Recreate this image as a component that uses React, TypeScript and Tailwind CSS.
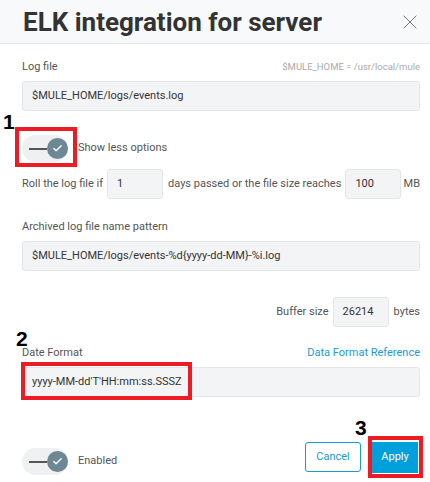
import { X, Check } from 'lucide-react'

const font = { fontFamily: '"Segoe UI", Roboto, "Liberation Sans", sans-serif' }

const Toggle = () => (
  <div className="relative w-[46px] h-[27px] rounded-full bg-[#eef0f2] shrink-0">
    <div className="absolute left-[7px] top-[13px] w-[18px] h-[1.5px] bg-[#555]" />
    <div className="absolute right-0 top-[3px] w-[21px] h-[21px] rounded-full bg-[#6d8795] flex items-center justify-center">
      <Check size={11} strokeWidth={3} className="text-white" />
    </div>
  </div>
)

const Field = ({ value, className = '' }: { value: string; className?: string }) => (
  <div
    className={`h-[30px] rounded-[3px] bg-[#f3f4f6] border border-[#e4e6e9] flex items-center pl-[9px] text-[#333] whitespace-nowrap shrink-0 ${className}`}
  >
    {value}
  </div>
)

const Mark = ({ n, className }: { n: string; className: string }) => (
  <span
    className={`absolute text-[21px] font-bold leading-none text-black ${className}`}
    style={{ fontFamily: '"Liberation Sans", Arial, sans-serif' }}
  >
    {n}
  </span>
)

export default function App() {
  return (
    <div className="relative w-[430px] h-[482px] overflow-hidden bg-white text-[#555] text-[11px]" style={font}>
      {/* header */}
      <div className="h-[44px] bg-[#f8f9fb] border-b border-[#e3e4e6] flex items-center justify-between pl-[23px] pr-[8px]">
        <h1 className="text-[26px] font-bold text-[#333] leading-none">ELK integration for server</h1>
        <X size={24} strokeWidth={1} className="text-[#777]" />
      </div>

      <div className="pl-[22px] pr-[10px]">
        <div className="mt-[14px] h-[18px] flex items-center justify-between">
          <span>Log file</span>
          <span className="text-[9.5px] text-[#aaa]">$MULE_HOME = /usr/local/mule</span>
        </div>
        <Field value="$MULE_HOME/logs/events.log" className="mt-[5px]" />

        <div className="mt-[24px] h-[27px] flex items-center gap-[10px]">
          <div className="relative">
            <Toggle />
            <div className="absolute -left-[7px] -top-[8px] w-[62px] h-[40px] border-4 border-[#ed1c24]" />
          </div>
          <span>Show less options</span>
        </div>

        <div className="mt-[7px] h-[30px] flex items-center whitespace-nowrap">
          <span className="mr-[4px]">Roll the log file if</span>
          <Field value="1" className="w-[56px]" />
          <span className="ml-[5px] mr-[4px]">days passed or the file size reaches</span>
          <Field value="100" className="w-[56px]" />
          <span className="ml-auto">MB</span>
        </div>

        <div className="mt-[19px] h-[18px] flex items-center">Archived log file name pattern</div>
        <Field value="$MULE_HOME/logs/events-%d{yyyy-dd-MM}-%i.log" className="mt-[5px]" />

        <div className="mt-[26px] h-[30px] flex items-center justify-end">
          <span className="mr-[4px]">Buffer size</span>
          <Field value="26214" className="w-[56px]" />
          <span className="ml-[5px]">bytes</span>
        </div>

        <div className="mt-[17px] h-[18px] flex items-center justify-between">
          <span>Date Format</span>
          <span className="text-[#1b9ad6]">Data Format Reference</span>
        </div>
        <div className="relative mt-[5px]">
          <Field value="yyyy-MM-dd'T'HH:mm:ss.SSSZ" />
          <div className="absolute -left-[1px] -top-[5px] w-[171px] h-[38px] border-4 border-[#ed1c24]" />
        </div>

        <div className="mt-[45px] flex items-start justify-between">
          <div className="mt-[6px] flex items-center gap-[10px]">
            <Toggle />
            <span>Enabled</span>
          </div>
          <div className="flex items-start gap-[11px] mr-[2px]">
            <button className="w-[56px] h-[30px] rounded-[3px] border border-[#1b9ad6] text-[#1b9ad6] bg-white">
              Cancel
            </button>
            <div className="relative">
              <button className="w-[46px] h-[31px] bg-[#00a0dd] text-white">Apply</button>
              <div className="absolute -left-[4px] -top-[6px] w-[55px] h-[42px] border-4 border-[#ed1c24]" />
            </div>
          </div>
        </div>
      </div>

      <Mark n="1" className="left-[3px] top-[111px]" />
      <Mark n="2" className="left-[16px] top-[328px]" />
      <Mark n="3" className="left-[355px] top-[417px]" />
    </div>
  )
}
